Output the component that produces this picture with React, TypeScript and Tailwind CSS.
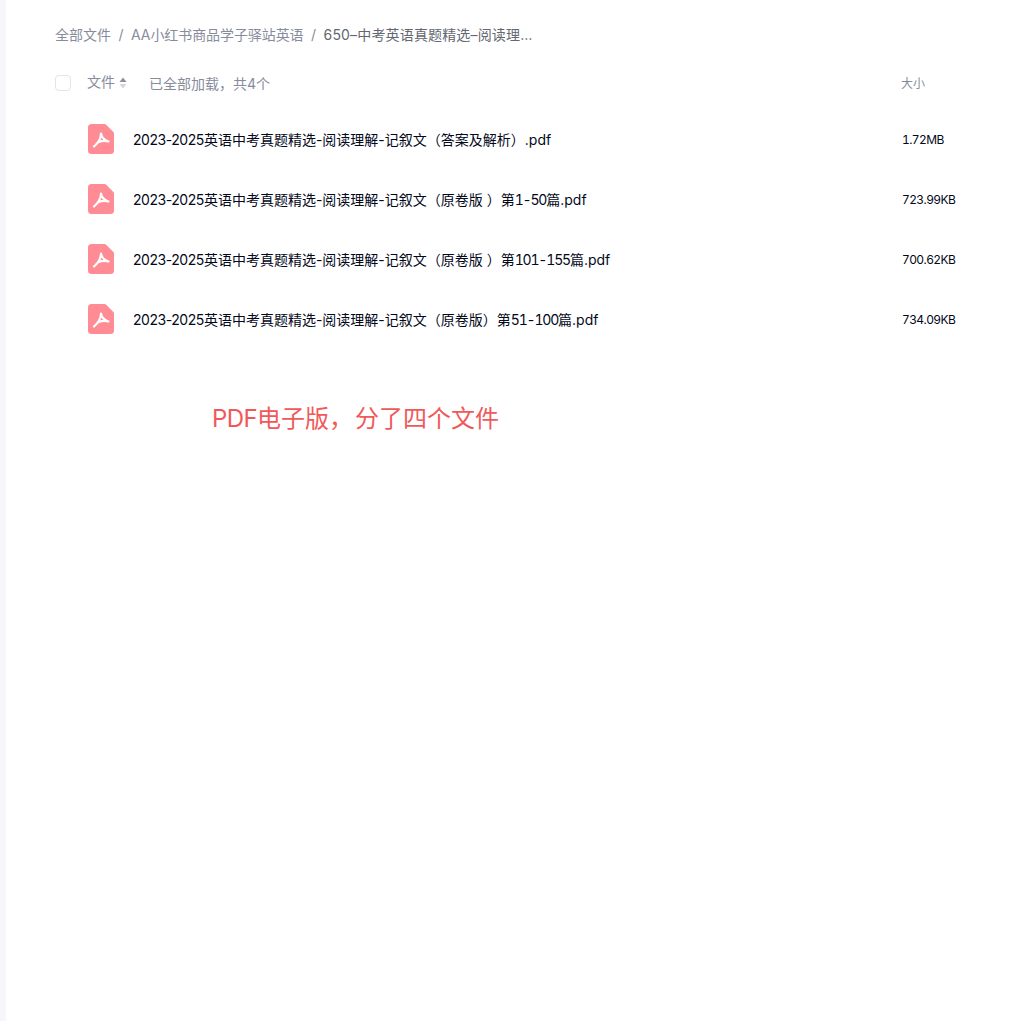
const files = [
  { mid: "（答案及解析）", num: "", after: ".pdf", size: "1.72MB" },
  { mid: "（原卷版 ）第", num: "1-50", after: "篇.pdf", size: "723.99KB" },
  { mid: "（原卷版 ）第", num: "101-155", after: "篇.pdf", size: "700.62KB" },
  { mid: "（原卷版）第", num: "51-100", after: "篇.pdf", size: "734.09KB" },
];

function PdfIcon() {
  return (
    <svg width="26" height="30" viewBox="0 0 26 30" className="shrink-0">
      <path
        d="M3.500 0H16.500a2 2 0 0 1 1.400.6L25.400 8a2 2 0 0 1 .6 1.400V26.500a3.500 3.500 0 0 1-3.500 3.500H3.500A3.500 3.500 0 0 1 0 26.500V3.500A3.500 3.500 0 0 1 3.500 0Z"
        fill="#ff8b95"
      />
      <path
        d="M13 9.500C13 14 10 19 6 22.500M13 9.500C13.500 13 16 16 20.500 17.500M11 18C14 16.500 17 16.500 20.500 17.500"
        fill="none"
        stroke="#fff"
        strokeWidth="2.200"
        strokeLinecap="round"
        strokeLinejoin="round"
      />
    </svg>
  );
}

export default function App() {
  return (
    <div className="flex min-h-[1021px] bg-white font-['Inter','Noto_Sans_CJK_SC',sans-serif]">
      {/* Left edge */}
      <div className="w-[6px] shrink-0 bg-[#f7f7fb]" />

      <div className="flex-1 pl-[49px] pr-[75px]">
        {/* Breadcrumb */}
        <div className="flex h-[69px] items-center text-[14px] text-[#878c9c]">
          <span>全部文件</span>
          <span className="px-[7.5px]">/</span>
          <span className="tracking-[-0.08px]">AA小红书商品学子驿站英语</span>
          <span className="px-[7.5px]">/</span>
          <span className="tracking-[0.16px] text-[#636770]">650–中考英语真题精选–阅读理…</span>
        </div>

        {/* Table header */}
        <div className="flex h-[26px] items-center pt-px text-[14px] text-[#878c9c]">
          <div className="h-4 w-4 rounded-[4px] border border-[#e3e4e8]" />
          <span className="ml-4 -translate-y-px">文件</span>
          <svg width="8" height="14" viewBox="0 0 8 14" className="ml-[4px]">
            <path d="M4 1.500 7.500 6H.5Z" fill="#8d919c" />
            <path d="M4 12.500 7.500 8H.5Z" fill="#d4d6dc" />
          </svg>
          <span className="ml-[22px] translate-y-px">已全部加载，共4个</span>
          <span className="ml-auto w-[54px] translate-y-px text-[12px]">大小</span>
        </div>

        {/* File rows */}
        <div className="mt-[14px]">
          {files.map((file) => (
            <div key={file.size} className="flex h-[60px] items-center">
              <div className="ml-[33px]">
                <PdfIcon />
              </div>
              <span className="ml-[19px] text-[14px] text-[#03081a]">
                <span className="tracking-[-0.45px]">2023-2025</span>
                英语中考真题精选-阅读理解-记叙文{file.mid}
                <span className="tracking-[-1.2px] tabular-nums">{file.num}</span>
                {file.after}
              </span>
              <span className="ml-auto w-[53px] translate-y-px text-[12px] tracking-[-0.6px] text-[#03081a] tabular-nums">
                {file.size}
              </span>
            </div>
          ))}
        </div>

        {/* Annotation */}
        <div className="mt-[52px] pl-[157px] text-[24px] leading-[36px] text-[#f0595a]">
          <span className="tracking-[-0.6px]">PDF</span>电子版<span className="mr-[2px]">，</span>分了四个文件
        </div>
      </div>
    </div>
  );
}
